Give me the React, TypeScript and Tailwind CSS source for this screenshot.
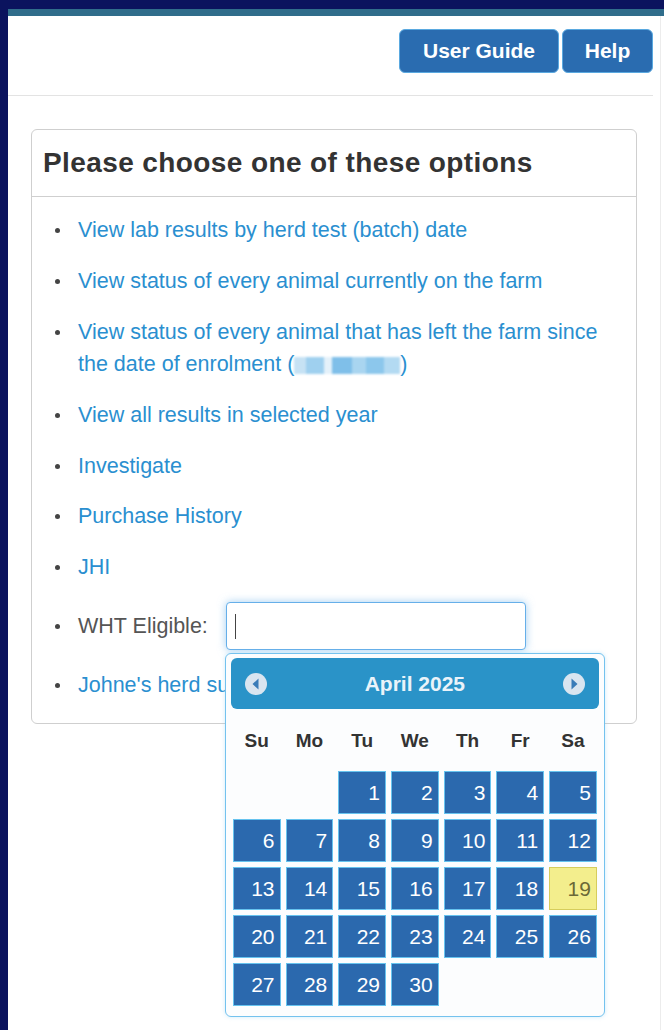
import React from "react";

const FONT = { fontFamily: '"Liberation Sans", Arial, Helvetica, sans-serif' };

const links = [
  "View lab results by herd test (batch) date",
  "View status of every animal currently on the farm",
];

const links2 = ["View all results in selected year", "Investigate", "Purchase History", "JHI"];

function Bullet() {
  return <span className="mt-[14px] h-[5px] w-[5px] shrink-0 rounded-full bg-[#444]" />;
}

function Item({ children }: { children: React.ReactNode }) {
  return (
    <li className="flex items-start gap-[18px] leading-[32px]">
      <Bullet />
      <div>{children}</div>
    </li>
  );
}

function NavCircle({ dir }: { dir: "prev" | "next" }) {
  return (
    <svg width="24" height="24" viewBox="0 0 24 24" className="shrink-0">
      <circle cx="12" cy="12" r="11" fill="#d9e5f0" />
      {dir === "prev" ? (
        <path d="M14.5 6.5 L8.5 12 L14.5 17.5 Z" fill="#3a7cb8" />
      ) : (
        <path d="M9.5 6.5 L15.5 12 L9.5 17.5 Z" fill="#3a7cb8" />
      )}
    </svg>
  );
}

function Calendar() {
  const heads = ["Su", "Mo", "Tu", "We", "Th", "Fr", "Sa"];
  const cells: (number | null)[] = [null, null];
  for (let d = 1; d <= 30; d++) cells.push(d);
  return (
    <div className="absolute left-[-1px] top-[51px] z-10 w-[380px] rounded-[6px] border border-[#74c2ee] bg-[#fcfdfe] px-[5px] pb-[10px] pt-[4px] shadow-[0_0_4px_rgba(116,194,238,0.35)]">
      <div className="flex h-[51px] items-center justify-between rounded-[6px] bg-[#2a93c8] px-[13px]">
        <NavCircle dir="prev" />
        <span className="text-[21px] font-bold text-[#eaf3fa]">April 2025</span>
        <NavCircle dir="next" />
      </div>
      <div className="mx-[2px] grid grid-cols-7 gap-x-[5px] pb-[14px] pt-[16px]">
        {heads.map((h) => (
          <div key={h} className="text-center text-[19px] font-bold leading-[32px] text-[#333]">
            {h}
          </div>
        ))}
      </div>
      <div className="mx-[2px] grid grid-cols-7 gap-x-[5px] gap-y-[5px]">
        {cells.map((d, i) =>
          d === null ? (
            <div key={"e" + i} className="h-[43px]" />
          ) : d === 19 ? (
            <div
              key={d}
              className="flex h-[43px] items-center justify-end border border-[#d6cd5c] bg-[#f3ee8d] pr-[5px] text-[21px] text-[#6b6937]"
            >
              {d}
            </div>
          ) : (
            <div
              key={d}
              className="flex h-[43px] items-center justify-end border border-[#66c3ef] bg-[#2b69ae] pr-[5px] text-[21px] text-white"
            >
              {d}
            </div>
          )
        )}
      </div>
    </div>
  );
}

export default function App() {
  return (
    <div style={FONT} className="flex min-h-[1030px] w-[664px] bg-[#0b135e]">
      <div className="w-[8px] shrink-0" />
      <div className="flex flex-1 flex-col pt-[9px]">
        <div className="h-[7px] bg-[#306d8b]" />
        <div className="flex flex-1 bg-white">
          <div className="flex flex-1 flex-col border-r border-[#ececec]">
            <div className="flex justify-end gap-[3px] pr-[7px] pt-[13px]">
              <button className="h-[44px] w-[160px] rounded-[6px] border border-[#5aa9e0] bg-[#2a6cb0] text-[21px] font-bold text-white">
                User Guide
              </button>
              <button className="h-[44px] w-[91px] rounded-[6px] border border-[#5aa9e0] bg-[#2a6cb0] text-[21px] font-bold text-white">
                Help
              </button>
            </div>
            <div className="mr-[7px] mt-[22px] h-px bg-[#e3e3e3]" />
            <div className="ml-[23px] mr-[23px] mt-[33px] rounded-[6px] border border-[#cfcfcf] bg-white">
              <div className="border-b border-[#cfcfcf] px-[11px] py-[17px]">
                <h1 className="text-[28px] font-bold leading-[32px] tracking-[0.4px] text-[#333]">
                  Please choose one of these options
                </h1>
              </div>
              <ul className="flex flex-col gap-[18.9px] pb-[22px] pl-[23px] pr-[12px] pt-[17px] text-[21.5px] text-[#2a8fd0]">
                {links.map((t) => (
                  <Item key={t}>{t}</Item>
                ))}
                <Item>
                  View status of every animal that has left the farm since
                  <br />
                  the date of enrolment (
                  <span className="relative top-[3px] inline-flex h-[17px] w-[106px] overflow-hidden blur-[1px]">
                    <span className="w-[12px] bg-[#c6e2f4]" />
                    <span className="w-[18px] bg-[#9fd0ef]" />
                    <span className="w-[8px] bg-[#e4f1fa]" />
                    <span className="w-[20px] bg-[#7fbfe9]" />
                    <span className="w-[14px] bg-[#a9d5f0]" />
                    <span className="w-[18px] bg-[#8cc7ec]" />
                    <span className="w-[16px] bg-[#b3daf2]" />
                  </span>
                  )
                </Item>
                {links2.map((t) => (
                  <Item key={t}>{t}</Item>
                ))}
                <li className="relative flex items-center gap-[18px]">
                  <span className="h-[5px] w-[5px] shrink-0 rounded-full bg-[#444]" />
                  <span className="text-[#555]">WHT Eligible:</span>
                  <div className="relative">
                    <div className="flex h-[48px] w-[300px] items-center rounded-[4px] border border-[#66afe9] bg-white pl-[8px] shadow-[0_0_8px_rgba(102,175,233,0.6)]">
                      <span className="h-[25px] w-px bg-[#444]" />
                    </div>
                    <Calendar />
                  </div>
                </li>
                <Item>Johne's herd summary</Item>
              </ul>
            </div>
          </div>
          <div className="w-[3px]" />
        </div>
      </div>
    </div>
  );
}
